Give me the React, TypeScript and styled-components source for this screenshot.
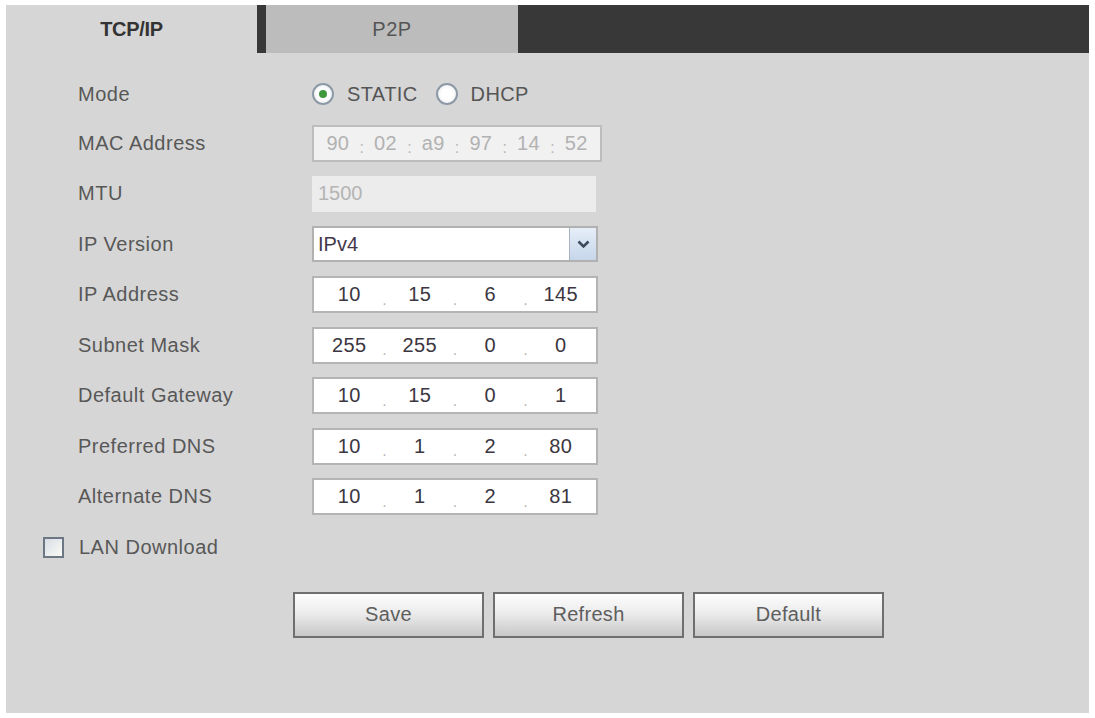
import { Fragment } from "react";
import styled, { createGlobalStyle } from "styled-components";

const GlobalStyle = createGlobalStyle`
  body {
    margin: 0;
    background: #ffffff;
    font-family: "Liberation Sans", Arial, sans-serif;
  }
`;

const Panel = styled.div`
  margin: 5px 6px;
  width: 1083px;
  height: 708px;
  background: #d6d6d6;
  display: flex;
  flex-direction: column;
`;

const TabBar = styled.div`
  display: flex;
  height: 48px;
  background: #383838;
`;

const Tab = styled.div<{ $active?: boolean }>`
  width: ${(p) => (p.$active ? "251px" : "252px")};
  margin-left: ${(p) => (p.$active ? "0" : "9px")};
  display: flex;
  align-items: center;
  justify-content: center;
  background: ${(p) => (p.$active ? "#d6d6d6" : "#bcbcbc")};
  color: ${(p) => (p.$active ? "#333" : "#555")};
  font-size: 20px;
  font-weight: ${(p) => (p.$active ? 700 : 400)};
  letter-spacing: ${(p) => (p.$active ? "-0.3px" : "0.5px")};
`;

const Form = styled.div`
  padding: 17px 0 0 36px;
  display: flex;
  flex-direction: column;
`;

const Row = styled.div<{ $h?: number }>`
  height: ${(p) => p.$h ?? 50.5}px;
  display: grid;
  grid-template-columns: 234px auto;
  align-items: center;
  padding-left: 36px;
`;

const Label = styled.div`
  font-size: 20px;
  letter-spacing: 0.5px;
  color: #585858;
`;

const RadioGroup = styled.div`
  display: flex;
  align-items: center;
`;

const Radio = styled.span<{ $checked?: boolean }>`
  width: 22px;
  height: 22px;
  box-sizing: border-box;
  border-radius: 50%;
  border: 2px solid #8d9aa6;
  background: radial-gradient(circle, #ffffff 40%, #e4e8ec 100%);
  display: inline-flex;
  align-items: center;
  justify-content: center;
  margin-right: 13px;
  &::after {
    content: "";
    width: 8px;
    height: 8px;
    border-radius: 50%;
    background: ${(p) => (p.$checked ? "#3f9a3f" : "transparent")};
  }
`;

const RadioText = styled.span`
  font-size: 20px;
  letter-spacing: 0.4px;
  color: #555;
  margin-right: 18px;
`;

const SegBox = styled.div<{ $disabled?: boolean; $w?: number }>`
  width: ${(p) => p.$w ?? 286}px;
  height: 37px;
  box-sizing: border-box;
  display: flex;
  align-items: center;
  background: ${(p) => (p.$disabled ? "#f1f1f1" : "#ffffff")};
  border: 2px solid ${(p) => (p.$disabled ? "#bdbdbd" : "#b4b4b4")};
`;

const Seg = styled.span<{ $disabled?: boolean }>`
  flex: 1;
  text-align: center;
  font-size: 20px;
  letter-spacing: 0.3px;
  color: ${(p) => (p.$disabled ? "#b2b2b2" : "#3b3640")};
`;

const Sep = styled.span`
  width: 0;
  position: relative;
  top: 5px;
  font-size: 16px;
  color: #b8b8b8;
  display: flex;
  justify-content: center;
`;

const PlainBox = styled.div`
  width: 284px;
  height: 36px;
  box-sizing: border-box;
  background: #ececec;
  color: #b4b4b4;
  font-size: 20px;
  padding-left: 6px;
  display: flex;
  align-items: center;
`;

const Select = styled.div`
  width: 286px;
  height: 36px;
  box-sizing: border-box;
  background: #ffffff;
  border: 2px solid #b1b1b1;
  display: flex;
  align-items: center;
  justify-content: space-between;
  font-size: 20px;
  color: #43384a;
  padding-left: 4px;
`;

const SelectArrow = styled.span`
  width: 27px;
  height: 32px;
  box-sizing: border-box;
  border-left: 1px solid #aab4c0;
  background: linear-gradient(#e6eef8, #c6d6ea);
  display: flex;
  align-items: center;
  justify-content: center;
`;

const LanRow = styled.div`
  height: 50.5px;
  display: flex;
  align-items: center;
  padding-left: 1px;
`;

const Checkbox = styled.span`
  width: 21px;
  height: 21px;
  box-sizing: border-box;
  border: 2px solid #6c7783;
  background: linear-gradient(135deg, #d8dee6, #fbfbf6);
  margin-right: 15px;
`;

const Buttons = styled.div`
  display: flex;
  gap: 9px;
  margin: 19px 0 0 251px;
`;

const Button = styled.button`
  width: 191px;
  height: 46px;
  box-sizing: border-box;
  border: 2px solid #6f6f6f;
  background: linear-gradient(#fdfdfd 0%, #ececec 45%, #c8c8c8 100%);
  font-family: "Liberation Sans", Arial, sans-serif;
  font-size: 20px;
  letter-spacing: 0.3px;
  color: #5e5e5e;
  padding: 0;
`;

function SegField({ parts, sep, disabled, width }: { parts: string[]; sep: string; disabled?: boolean; width?: number }) {
  return (
    <SegBox $disabled={disabled} $w={width}>
      {parts.map((p, i) => (
        <Fragment key={i}>
          {i > 0 && <Sep>{sep}</Sep>}
          <Seg $disabled={disabled}>{p}</Seg>
        </Fragment>
      ))}
    </SegBox>
  );
}

const ipRows: [string, string[]][] = [
  ["IP Address", ["10", "15", "6", "145"]],
  ["Subnet Mask", ["255", "255", "0", "0"]],
  ["Default Gateway", ["10", "15", "0", "1"]],
  ["Preferred DNS", ["10", "1", "2", "80"]],
  ["Alternate DNS", ["10", "1", "2", "81"]],
];

const mac = ["90", "02", "a9", "97", "14", "52"];

export default function App() {
  return (
    <>
      <GlobalStyle />
      <Panel>
        <TabBar>
          <Tab $active>TCP/IP</Tab>
          <Tab>P2P</Tab>
        </TabBar>
        <Form>
          <Row $h={48}>
            <Label>Mode</Label>
            <RadioGroup>
              <Radio $checked />
              <RadioText>STATIC</RadioText>
              <Radio />
              <RadioText>DHCP</RadioText>
            </RadioGroup>
          </Row>
          <Row>
            <Label>MAC Address</Label>
            <SegField parts={mac} sep=":" disabled width={290} />
          </Row>
          <Row>
            <Label>MTU</Label>
            <PlainBox>1500</PlainBox>
          </Row>
          <Row>
            <Label>IP Version</Label>
            <Select>
              IPv4
              <SelectArrow>
                <svg width="13" height="9" viewBox="0 0 13 9">
                  <path d="M1.5 1.5 L6.5 6.5 L11.5 1.5" fill="none" stroke="#3d4a5a" strokeWidth="2.6" />
                </svg>
              </SelectArrow>
            </Select>
          </Row>
          {ipRows.map(([label, parts]) => (
            <Row key={label}>
              <Label>{label}</Label>
              <SegField parts={parts} sep="." />
            </Row>
          ))}
          <LanRow>
            <Checkbox />
            <Label>LAN Download</Label>
          </LanRow>
          <Buttons>
            <Button>Save</Button>
            <Button>Refresh</Button>
            <Button>Default</Button>
          </Buttons>
        </Form>
      </Panel>
    </>
  );
}
